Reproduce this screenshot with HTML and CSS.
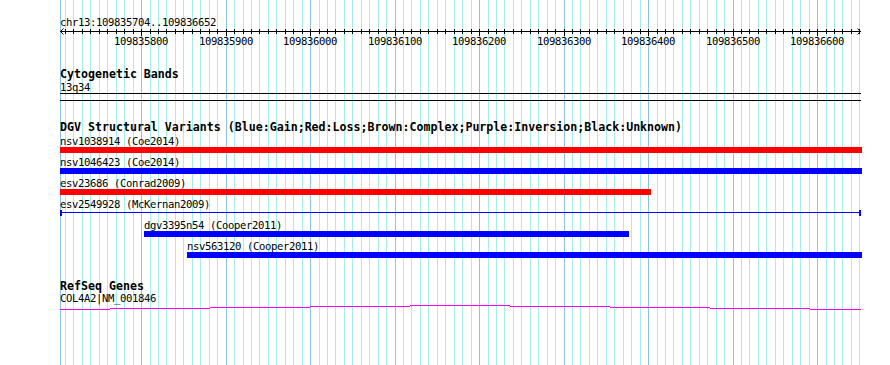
FILE: index.html
```html
<!DOCTYPE html>
<html>
<head>
<meta charset="utf-8">
<link rel="stylesheet" href="styles.css">
</head>
<body>
<div class="panel">
  <svg class="grid" width="890" height="365" viewBox="0 0 890 365">
    <path class="grid-minor" d="M65.5 0V365M73.5 0V365M82.5 0V365M90.5 0V365M99.5 0V365M107.5 0V365M116.5 0V365M124.5 0V365M133.5 0V365M150.5 0V365M158.5 0V365M166.5 0V365M175.5 0V365M183.5 0V365M192.5 0V365M200.5 0V365M209.5 0V365M217.5 0V365M234.5 0V365M243.5 0V365M251.5 0V365M259.5 0V365M268.5 0V365M276.5 0V365M285.5 0V365M293.5 0V365M302.5 0V365M319.5 0V365M327.5 0V365M335.5 0V365M344.5 0V365M352.5 0V365M361.5 0V365M369.5 0V365M378.5 0V365M386.5 0V365M403.5 0V365M411.5 0V365M420.5 0V365M428.5 0V365M437.5 0V365M445.5 0V365M454.5 0V365M462.5 0V365M471.5 0V365M488.5 0V365M496.5 0V365M504.5 0V365M513.5 0V365M521.5 0V365M530.5 0V365M538.5 0V365M547.5 0V365M555.5 0V365M572.5 0V365M580.5 0V365M589.5 0V365M597.5 0V365M606.5 0V365M614.5 0V365M623.5 0V365M631.5 0V365M640.5 0V365M657.5 0V365M665.5 0V365M673.5 0V365M682.5 0V365M690.5 0V365M699.5 0V365M707.5 0V365M716.5 0V365M724.5 0V365M741.5 0V365M749.5 0V365M758.5 0V365M766.5 0V365M775.5 0V365M783.5 0V365M792.5 0V365M800.5 0V365M809.5 0V365M826.5 0V365M834.5 0V365M842.5 0V365M851.5 0V365M859.5 0V365"/>
    <path class="grid-major" d="M60.5 0V365M141.5 0V365M226.5 0V365M310.5 0V365M395.5 0V365M479.5 0V365M564.5 0V365M648.5 0V365M733.5 0V365M817.5 0V365"/>
  </svg>

  <div class="content">
    <div class="ruler">
      <div class="chr">chr13:109835704..109836652</div>
      <svg class="scale" width="890" height="20" viewBox="0 0 890 20">
        <rect class="ink" x="60" y="3" width="801" height="1"/>
        <path class="tick" d="M65.5 1V6M73.5 1V6M82.5 1V6M90.5 1V6M99.5 1V6M107.5 1V6M116.5 1V6M124.5 1V6M133.5 1V6M150.5 1V6M158.5 1V6M166.5 1V6M175.5 1V6M183.5 1V6M192.5 1V6M200.5 1V6M209.5 1V6M217.5 1V6M234.5 1V6M243.5 1V6M251.5 1V6M259.5 1V6M268.5 1V6M276.5 1V6M285.5 1V6M293.5 1V6M302.5 1V6M319.5 1V6M327.5 1V6M335.5 1V6M344.5 1V6M352.5 1V6M361.5 1V6M369.5 1V6M378.5 1V6M386.5 1V6M403.5 1V6M411.5 1V6M420.5 1V6M428.5 1V6M437.5 1V6M445.5 1V6M454.5 1V6M462.5 1V6M471.5 1V6M488.5 1V6M496.5 1V6M504.5 1V6M513.5 1V6M521.5 1V6M530.5 1V6M538.5 1V6M547.5 1V6M555.5 1V6M572.5 1V6M580.5 1V6M589.5 1V6M597.5 1V6M606.5 1V6M614.5 1V6M623.5 1V6M631.5 1V6M640.5 1V6M657.5 1V6M665.5 1V6M673.5 1V6M682.5 1V6M690.5 1V6M699.5 1V6M707.5 1V6M716.5 1V6M724.5 1V6M741.5 1V6M749.5 1V6M758.5 1V6M766.5 1V6M775.5 1V6M783.5 1V6M792.5 1V6M800.5 1V6M809.5 1V6M826.5 1V6M834.5 1V6M842.5 1V6M851.5 1V6M859.5 1V6M141.5 1V8M226.5 1V8M310.5 1V8M395.5 1V8M479.5 1V8M564.5 1V8M648.5 1V8M733.5 1V8M817.5 1V8"/>
        <path class="arrow" d="M63.5 0.5L60.5 3.5L63.5 6.5M857.5 0.5L860.5 3.5L857.5 6.5"/>
        <text class="scale-label" x="141" y="17">109835800</text>
        <text class="scale-label" x="226" y="17">109835900</text>
        <text class="scale-label" x="310" y="17">109836000</text>
        <text class="scale-label" x="395" y="17">109836100</text>
        <text class="scale-label" x="479" y="17">109836200</text>
        <text class="scale-label" x="564" y="17">109836300</text>
        <text class="scale-label" x="648" y="17">109836400</text>
        <text class="scale-label" x="733" y="17">109836500</text>
        <text class="scale-label" x="817" y="17">109836600</text>
      </svg>
    </div>

    <section class="track track-cyto">
      <div class="title">Cytogenetic Bands</div>
      <div class="label">13q34</div>
      <div class="band"></div>
    </section>

    <section class="track track-dgv">
      <div class="title">DGV Structural Variants (Blue:Gain;Red:Loss;Brown:Complex;Purple:Inversion;Black:Unknown)</div>
      <div class="feature">
        <div class="label">nsv1038914 (Coe2014)</div>
        <div class="bar loss" style="width:802px"></div>
      </div>
      <div class="feature">
        <div class="label">nsv1046423 (Coe2014)</div>
        <div class="bar gain" style="width:802px"></div>
      </div>
      <div class="feature">
        <div class="label">esv23686 (Conrad2009)</div>
        <div class="bar loss" style="width:591px"></div>
      </div>
      <div class="feature">
        <div class="label">esv2549928 (McKernan2009)</div>
        <div class="span gain-line" style="width:801px"></div>
      </div>
      <div class="feature" style="margin-left:84px">
        <div class="label">dgv3395n54 (Cooper2011)</div>
        <div class="bar gain" style="width:485px"></div>
      </div>
      <div class="feature" style="margin-left:127px">
        <div class="label">nsv563120 (Cooper2011)</div>
        <div class="bar gain" style="width:675px"></div>
      </div>
    </section>

    <section class="track track-refseq">
      <div class="title">RefSeq Genes</div>
      <div class="label label-gene">COL4A2|NM_001846</div>
      <svg class="gene" width="801" height="6" viewBox="0 0 801 6">
        <rect x="0" y="5" width="50" height="1"/>
        <rect x="50" y="4" width="100" height="1"/>
        <rect x="150" y="3" width="100" height="1"/>
        <rect x="250" y="2" width="100" height="1"/>
        <rect x="350" y="1" width="100" height="1"/>
        <rect x="450" y="2" width="100" height="1"/>
        <rect x="550" y="3" width="100" height="1"/>
        <rect x="650" y="4" width="100" height="1"/>
        <rect x="750" y="5" width="51" height="1"/>
      </svg>
    </section>
  </div>
</div>
</body>
</html>
```

FILE: styles.css
```css
html, body {
  margin: 0;
  padding: 0;
  background: #ffffff;
  overflow: hidden;
}

body {
  width: 890px;
  height: 365px;
  font-family: "DejaVu Sans Mono", "Liberation Mono", monospace;
  color: #000000;
}

.panel {
  position: relative;
  width: 890px;
  height: 365px;
}

.grid {
  position: absolute;
  top: 0;
  left: 0;
  display: block;
}

.grid-minor {
  stroke: #a9eded;
  stroke-width: 1;
  fill: none;
  shape-rendering: crispEdges;
}

.grid-major {
  stroke: #8ec3e6;
  stroke-width: 1;
  fill: none;
  shape-rendering: crispEdges;
}

.content {
  position: relative;
  display: flex;
  flex-direction: column;
}

.ruler {
  display: flex;
  flex-direction: column;
  padding-top: 16px;
}

.chr {
  padding-left: 60px;
  font-size: 10.6px;
  letter-spacing: -0.38px;
  line-height: 12px;
  height: 12px;
  white-space: pre;
}

.scale {
  display: block;
}

.ink {
  fill: #000000;
  shape-rendering: crispEdges;
}

.tick {
  stroke: #000000;
  stroke-width: 1;
  fill: none;
  shape-rendering: crispEdges;
}

.arrow {
  stroke: #000000;
  stroke-width: 1;
  fill: none;
}

.scale-label {
  font-family: "DejaVu Sans Mono", "Liberation Mono", monospace;
  font-size: 10.6px;
  letter-spacing: -0.38px;
  text-anchor: middle;
  fill: #000000;
}

.track {
  display: flex;
  flex-direction: column;
  padding-left: 60px;
}

.title {
  font-size: 11.62px;
  font-weight: bold;
  line-height: 13px;
  height: 13px;
  white-space: pre;
}

.label {
  font-size: 10.6px;
  letter-spacing: -0.38px;
  line-height: 12px;
  height: 12px;
  white-space: pre;
}

.track-cyto {
  margin-top: 20px;
}

.band {
  width: 801px;
  height: 6px;
  border-top: 1px solid #000000;
  border-bottom: 1px solid #000000;
}

.track-dgv {
  margin-top: 20px;
}

.track-dgv .title {
  margin-bottom: 1px;
}

.feature {
  display: flex;
  flex-direction: column;
  height: 21px;
}

.bar {
  height: 6px;
}

.loss {
  background: #ff0000;
}

.gain {
  background: #0000ff;
}

.span {
  box-sizing: border-box;
  height: 6px;
}

.gain-line {
  border-left: 2px solid #0000ff;
  border-right: 2px solid #0000ff;
  background: linear-gradient(#0000ff, #0000ff) 0 2px / 100% 1px no-repeat;
}

.track-refseq {
  margin-top: 19px;
}

.label-gene {
  margin-top: -1px;
}

.gene {
  display: block;
  fill: #ff00ff;
  shape-rendering: crispEdges;
}
```
